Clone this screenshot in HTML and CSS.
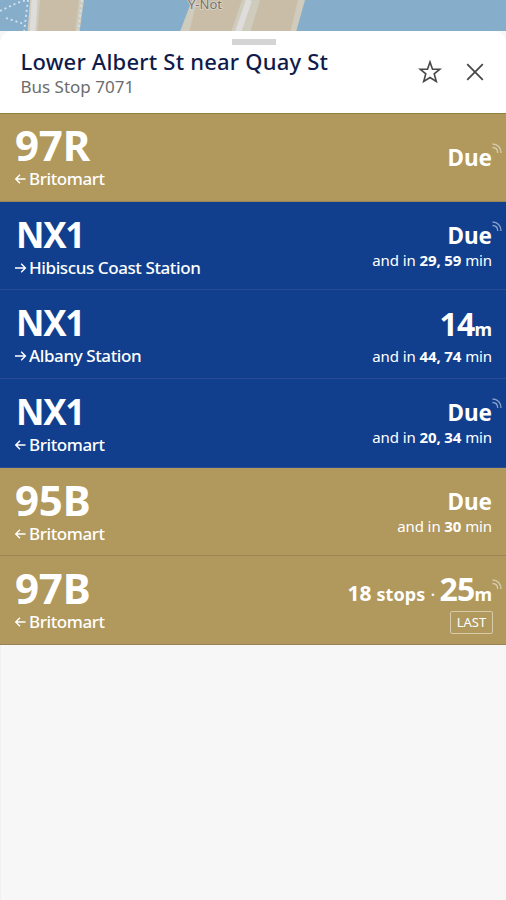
FILE: index.html
```html
<!DOCTYPE html>
<html lang="en">
<head>
<meta charset="utf-8">
<title>Lower Albert St near Quay St</title>
<link rel="stylesheet" href="styles.css">
</head>
<body>
<svg width="0" height="0" class="defs" aria-hidden="true">
  <symbol id="left" viewBox="0 0 12 12"><path d="M10.500 6H1M5 1.800L0.800 6l4.200 4.200"/></symbol>
  <symbol id="right" viewBox="0 0 12 12"><path d="M0 6H10.200M6.200 1.800L10.400 6l-4.200 4.200"/></symbol>
  <symbol id="live" viewBox="0 0 10 11"><path d="M0.500 1C5.500 1 9 4.800 9 10M0.500 4.500C3.700 4.500 5.700 6.800 5.700 10"/></symbol>
</svg>
<div class="app">
  <div class="map">
    <svg width="506" height="50" viewBox="0 0 506 50">
      <path class="pier-edge" d="M30 0h54l-7 50H26z"/>
      <path class="pier" d="M40 0h39l-6 50H36z"/>
      <path class="road" d="M34.500 0l-3 50"/>
      <path class="pier-edge" d="M192 0h113l-14 50H173z"/>
      <path class="pier" d="M197 0h45l-17 50h-40zM260 0h38l-12 50h-41z"/>
      <path class="road" d="M249 0l-17 50"/>
      <path class="route" d="M28 0l-5 40M82 0l-5 40M0 11l17-8 10-3M6 18l18 6"/>
      <text x="188" y="9">Y-Not</text>
    </svg>
  </div>
  <main class="sheet">
    <header class="header">
      <div class="handle"></div>
      <div class="stop">
        <h1>Lower Albert St near Quay St</h1>
        <p>Bus Stop 7071</p>
      </div>
      <svg class="star" viewBox="0 0 24 24"><path d="M12 2l2.500 7.200h7.400l-5.700 4.600 2.100 7.700-6.300-4-6.300 4 2.100-7.700-5.700-4.600h7.400z"/></svg>
      <svg class="close" viewBox="0 0 18 18"><path d="M1.200 1.200l15.600 15.600M16.800 1.200L1.200 16.800"/></svg>
    </header>
    <section class="routes">
      <article class="row gold">
        <div><h2>97R</h2><p class="dest"><svg><use href="#left"/></svg><span>Britomart</span></p></div>
        <div class="times"><p class="due">Due<svg class="live"><use href="#live"/></svg></p></div>
      </article>
      <article class="row blue">
        <div><h2>NX1</h2><p class="dest"><svg><use href="#right"/></svg><span>Hibiscus Coast Station</span></p></div>
        <div class="times"><p class="due">Due<svg class="live"><use href="#live"/></svg></p><p class="next">and in <b>29, 59</b> min</p></div>
      </article>
      <article class="row blue">
        <div><h2>NX1</h2><p class="dest"><svg><use href="#right"/></svg><span>Albany Station</span></p></div>
        <div class="times"><p class="count">14<small>m</small></p><p class="next">and in <b>44, 74</b> min</p></div>
      </article>
      <article class="row blue">
        <div><h2>NX1</h2><p class="dest"><svg><use href="#left"/></svg><span>Britomart</span></p></div>
        <div class="times"><p class="due">Due<svg class="live"><use href="#live"/></svg></p><p class="next">and in <b>20, 34</b> min</p></div>
      </article>
      <article class="row gold">
        <div><h2>95B</h2><p class="dest"><svg><use href="#left"/></svg><span>Britomart</span></p></div>
        <div class="times"><p class="due">Due</p><p class="next">and in <b>30</b> min</p></div>
      </article>
      <article class="row gold">
        <div><h2>97B</h2><p class="dest"><svg><use href="#left"/></svg><span>Britomart</span></p></div>
        <div class="times"><p class="count"><span class="stops"><b>18</b> stops<i>·</i></span>25<small>m</small><svg class="live"><use href="#live"/></svg></p><p class="last">LAST</p></div>
      </article>
    </section>
  </main>
</div>
</body>
</html>
```
FILE: styles.css
```css
* { box-sizing: border-box; }
body, h1, h2, p { margin: 0; }
body { font-family: "Noto Sans", "Open Sans", sans-serif; background: #f7f7f7; }
.defs { position: absolute; }
.app { height: 900px; display: flex; flex-direction: column; overflow: hidden; }
.map { height: 31px; flex: none; background: #86aecb; }
.map svg { display: block; }
.map text { font-size: 13px; fill: #77736d; stroke: #ddd8cd; stroke-width: 1.5px; paint-order: stroke; }
.pier { fill: #c9bda7; }
.pier-edge { fill: #cfcbbd; }
.road { fill: none; stroke: #dedddb; stroke-width: 6; }
.route { fill: none; stroke: #d3e3ef; stroke-width: 1.8; stroke-dasharray: 2 3; }
.sheet { position: relative; flex: 1; background: #f7f7f7; border-left: 1px solid #f0f0f0; border-radius: 12px 12px 0 0; }
.header { height: 82px; margin-left: -1px; display: flex; align-items: flex-start; background: #fff; border-radius: 12px 12px 0 0; padding: 16px 22.500px 0 20.500px; }
.handle { position: absolute; top: 8px; left: 231px; width: 44px; height: 6px; background: #d4d4d4; }
.stop { flex: 1; white-space: nowrap; }
h1 { font-size: 22px; line-height: 28px; font-weight: 500; color: #101b4b; letter-spacing: 0.2px; }
.stop p { font-size: 17px; line-height: 22px; margin-top: 1px; color: #6c6c6c; }
.star, .close { fill: none; stroke: #484848; stroke-width: 1.6; }
.star { width: 24px; height: 24px; margin: 13px 23.500px 0 0; }
.close { width: 18px; height: 18px; margin-top: 16px; stroke-width: 1.8; }
.routes { display: grid; grid-auto-rows: 88.7px; margin-left: -1px; color: #fff; }
.row { display: flex; justify-content: space-between; align-items: center; padding: 0 14px 0 15px; border-bottom: 1px solid; }
.gold { background: #b1985c; border-color: #9b8357; }
.blue { background: #113f8e; border-color: #284b93; }
.row:first-child { box-shadow: inset 0 1px #92803f; }
.row > div:first-child { align-self: flex-start; padding-top: 9px; }
h2 { font-size: 42px; line-height: 46px; font-weight: 700; letter-spacing: -0.2px; }
.blue h2 { font-size: 35px; padding: 1px 0 0 1px; line-height: 45px; letter-spacing: -1.3px; }
.dest { display: flex; align-items: center; margin-top: -1px; font-size: 17px; line-height: 24px; font-weight: 500; letter-spacing: -0.4px; }
.dest svg { width: 12px; height: 12px; margin-right: 2px; fill: none; stroke: #fff; stroke-width: 1.4; }
.times { text-align: right; white-space: nowrap; padding-bottom: 1px; }
.due, .count { position: relative; font-weight: 700; }
.due { font-size: 22.5px; line-height: 28px; padding-top: 3px; }
.count { font-size: 32px; line-height: 44px; padding-top: 1px; letter-spacing: -0.8px; }
.count small, .stops, .stops b { line-height: 0; }
.count small { font-size: 18px; letter-spacing: 0; }
.next { font-size: 15px; line-height: 22px; margin-top: -1px; letter-spacing: -0.1px; }
.next b, .stops b { font-weight: 700; }
.live { position: absolute; right: -10px; top: 2px; width: 10px; height: 11px; fill: none; stroke: #fff; stroke-opacity: .5; stroke-width: 1.3; }
.count .live { top: 13px; }
.stops { font-size: 18px; letter-spacing: 0.100px; }
.stops b { font-size: 21px; }
.stops i { font-style: normal; font-weight: 400; margin: 0 4px 0 5px; }
.last { width: 43px; height: 23px; margin: 0 -1px 0 auto; border: 1.5px solid #d8cba9; border-radius: 2px; font-size: 13px; line-height: 21px; text-align: center; }
```
